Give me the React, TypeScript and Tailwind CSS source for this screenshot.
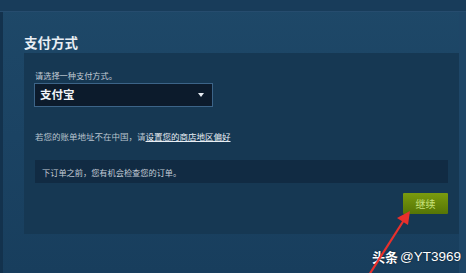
import React from 'react';

const font = { fontFamily: '"Noto Sans CJK SC", "Noto Sans", sans-serif' };

export default function App() {
  return (
    <div
      className="relative w-[466px] h-[273px] overflow-hidden bg-gradient-to-b from-[#1e4868] via-[#1b4363] to-[#183e5d] text-white"
      style={font}
    >
      {/* top strip */}
      <div className="h-[12px] bg-[#183c5a] border-b border-[#264c6e]" />

      <div className="flex h-[261px]">
        <div className="w-[3px] bg-[#13324d]" />
        <div className="pl-[21px]">
          <h2 className="pt-[20px] text-[13.5px] leading-[20px] font-bold text-[#e8eef4]">支付方式</h2>

          <div className="mt-[1px] w-[435px] h-[181px] bg-[#163853] pl-[11px] pr-[11px] pt-[16px] flex flex-col">
            <p className="text-[8.2px] leading-[12px] text-[#c3ccd6]">请选择一种支付方式。</p>

            <div className="mt-[2px] -ml-[1px] w-[179px] h-[24px] bg-[#0c1b2c] border border-[#3c6488] flex items-center justify-between pl-[5px] pr-[8px]">
              <span className="text-[11.5px] font-bold text-[#f2f5f8]">支付宝</span>
              <span className="w-0 h-0 border-l-[3.5px] border-r-[3.5px] border-t-[4px] border-l-transparent border-r-transparent border-t-[#e6ecf2]" />
            </div>

            <p className="mt-[23px] text-[8.5px] leading-[12px] text-[#b9c4cf]">
              若您的账单地址不在中国，请
              <span className="underline text-[#e8eef4]">设置您的商店地区偏好</span>
            </p>

            <div className="mt-[18px] h-[23px] bg-[#112b43] flex items-center pl-[7px]">
              <p className="text-[8.2px] leading-[12px] text-[#c3ccd6]">下订单之前，您有机会检查您的订单。</p>
            </div>

            <div className="mt-[10px] flex justify-end">
              <button className="w-[45px] h-[21px] bg-gradient-to-b from-[#7a9b0e] to-[#567506] text-[10px] text-[#c8e27c] rounded-[1px]">
                继续
              </button>
            </div>
          </div>
        </div>
        <div className="flex-1 bg-[#1e4667]" />
      </div>

      {/* watermark */}
      <div className="absolute left-[372px] top-[248px] flex items-center whitespace-nowrap text-white [text-shadow:0_0_2px_rgba(0,0,0,0.6)]">
        <span className="text-[13px] leading-[18px] font-bold">头条</span>
        <span className="ml-[2px] text-[13.5px] leading-[18px]" style={{ fontFamily: '"Liberation Sans", sans-serif' }}>
          @YT3969
        </span>
      </div>

      {/* red arrow */}
      <svg className="absolute inset-0" width="466" height="273" viewBox="0 0 466 273">
        <line x1="369" y1="275" x2="404" y2="220" stroke="#e8302c" strokeWidth="2.2" />
        <polygon points="410,211 397,218 408,225" fill="#e8302c" />
      </svg>
    </div>
  );
}
